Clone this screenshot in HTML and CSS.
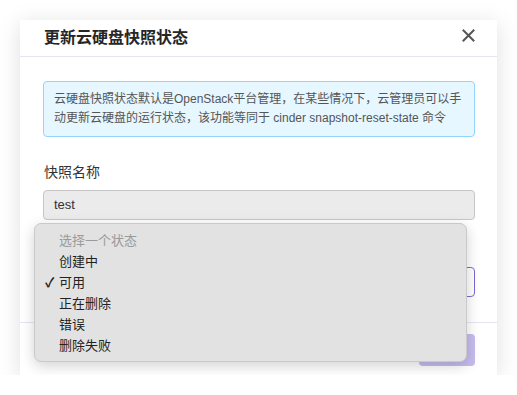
FILE: index.html
```html
<!DOCTYPE html>
<html lang="zh">
<head>
<meta charset="utf-8">
<title>更新云硬盘快照状态</title>
<link rel="stylesheet" href="styles.css">
</head>
<body>
<div class="modal">
  <div class="modal-header">
    <h1 class="modal-title">更新云硬盘快照状态</h1>
    <span class="close">
      <svg width="13" height="13" viewBox="0 0 13 13"><path d="M1.5 1.5 L11.5 11.5 M11.5 1.5 L1.5 11.5" stroke="#555" stroke-width="2" stroke-linecap="square"/></svg>
    </span>
  </div>
  <div class="modal-body">
    <div class="alert">云硬盘快照状态默认是OpenStack平台管理，在某些情况下，云管理员可以手<br>动更新云硬盘的运行状态，该功能等同于 cinder snapshot-reset-state 命令</div>
    <div class="form-item">
      <label class="form-label">快照名称</label>
      <div class="input">test</div>
    </div>
    <div class="form-item form-item-select">
      <div class="select">
        <svg class="chevron" width="10" height="10" viewBox="0 0 10 10"><path d="M2 3.5 L5 6.5 L8 3.5" stroke="#333" stroke-width="1.6" fill="none"/></svg>
      </div>
    </div>
  </div>
  <div class="modal-footer">
    <span class="btn btn-primary"></span>
  </div>
  <ul class="dropdown">
    <li class="opt placeholder">选择一个状态</li>
    <li class="opt">创建中</li>
    <li class="opt selected"><span class="check">✓</span>可用</li>
    <li class="opt">正在删除</li>
    <li class="opt">错误</li>
    <li class="opt">删除失败</li>
  </ul>
</div>
</body>
</html>
```
FILE: styles.css
```css
* { box-sizing: border-box; }
html, body { margin: 0; padding: 0; background: #fff; }
body {
  padding: 20px 20px 0 20px;
  font-family: "Liberation Sans", "Noto Sans CJK SC", sans-serif;
  color: #333;
}
.modal {
  position: relative;
  width: 477px;
  height: 355px;
  background: #fff;
  box-shadow: 0 4px 22px rgba(0,0,0,0.13);
}
.modal-header {
  height: 37px;
  padding: 0 24px 5px 24px;
  display: flex;
  align-items: center;
  justify-content: space-between;
  border-bottom: 1px solid #e3e5f0;
}
.modal-title {
  margin: 0;
  font-size: 16px;
  font-weight: bold;
  color: #262626;
}
.close { display: flex; margin-right: -2px; }
.modal-body {
  padding: 24px 22px 25px 23px;
}
.alert {
  border: 1px solid #91d5ff;
  background: #e6f7ff;
  border-radius: 4px;
  padding: 8px 10px;
  font-size: 12px;
  line-height: 19px;
  color: #555;
  white-space: nowrap;
}
.form-item { margin-top: 25px; }
.form-label {
  display: block;
  font-size: 14px;
  line-height: 20px;
  margin-left: 1px;
  color: #333;
}
.input {
  margin-top: 8px;
  height: 30px;
  border: 1px solid #c6c6c6;
  border-radius: 4px;
  background: #ebebeb;
  padding: 0 10px;
  font-size: 13px;
  line-height: 28px;
  color: #333;
}
.form-item-select { margin-top: 47px; }
.select {
  height: 30px;
  border: 1px solid #7a6bd6;
  border-radius: 4px;
  background: #fff;
  padding: 0 10px;
  display: flex;
  justify-content: flex-end;
  align-items: center;
}
.chevron { margin-right: -4px; }
.modal-footer {
  border-top: 1px solid #e3e5f0;
  padding: 11px 22px 9px;
  display: flex;
  justify-content: flex-end;
}
.btn {
  display: block;
  height: 32px;
  border-radius: 4px;
}
.btn-primary {
  width: 56px;
  background: #c6bcef;
}
.dropdown {
  position: absolute;
  left: 14px;
  top: 203px;
  width: 433px;
  margin: 0;
  padding: 6px 0 5px;
  list-style: none;
  background: #e2e2e2;
  border: 1px solid #c9c9c9;
  border-radius: 7px;
  box-shadow: 0 4px 14px rgba(0,0,0,0.18);
}
.opt {
  position: relative;
  height: 21px;
  line-height: 21px;
  padding-left: 24px;
  font-size: 13px;
  color: #222;
}
.placeholder { color: #9a9a9a; }
.check {
  position: absolute;
  left: 10px;
  top: 0;
  font-size: 13px;
  font-weight: bold;
  color: #222;
}
```
